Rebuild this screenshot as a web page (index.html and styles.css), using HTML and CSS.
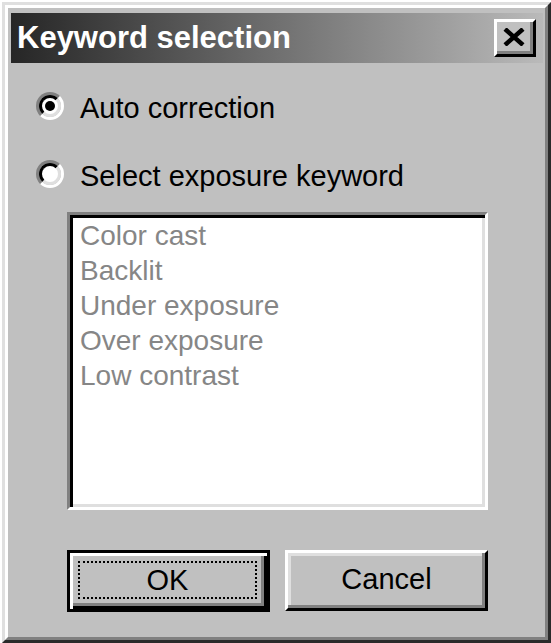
FILE: index.html
```html
<html>
<head>
  <link rel="stylesheet" href="styles.css">
</head>
<body>
  <div class="window">
    <div class="frame">
      <div class="titlebar">
        <span class="title">Keyword selection</span>
        <div class="close">
          <svg width="22" height="18" viewBox="0 0 22 18">
            <path d="M2 1 L20 17 M20 1 L2 17" stroke="#000" stroke-width="4.5" fill="none"/>
          </svg>
        </div>
      </div>
      <div class="content">
        <div class="option">
          <span class="radio"><span class="radio-in"><span class="dot"></span></span></span>
          <span class="label">Auto correction</span>
        </div>
        <div class="option">
          <span class="radio"><span class="radio-in"></span></span>
          <span class="label">Select exposure keyword</span>
        </div>
        <div class="listbox">
          <div class="item">Color cast</div>
          <div class="item">Backlit</div>
          <div class="item">Under exposure</div>
          <div class="item">Over exposure</div>
          <div class="item">Low contrast</div>
        </div>
        <div class="buttons">
          <div class="btn default"><span class="focus">OK</span></div>
          <div class="btn">Cancel</div>
        </div>
      </div>
    </div>
  </div>
</body>
</html>
```
FILE: styles.css
```css
html, body {
  margin: 0;
  padding: 0;
  background: #fff;
  font-family: 'Liberation Sans', Arial, sans-serif;
}
.window {
  margin: 2px 0 0 2px;
  width: 549px;
  height: 641px;
  box-sizing: border-box;
  border: 3px solid;
  border-color: #dfdfdf #2a2a2a #2a2a2a #dfdfdf;
  background: #c0c0c0;
}
.frame {
  height: 100%;
  box-sizing: border-box;
  border: 3px solid;
  border-color: #fff #808080 #808080 #fff;
  padding: 5px 2px 3px 3px;
  display: flex;
  flex-direction: column;
}
.titlebar {
  height: 50px;
  flex: none;
  display: flex;
  align-items: center;
  justify-content: space-between;
  padding: 0 7px 0 6px;
  background: linear-gradient(90deg, #262626, #bababa);
}
.title {
  color: #fff;
  font-weight: bold;
  font-size: 31px;
}
.close {
  width: 42px;
  height: 38px;
  box-sizing: border-box;
  border: 3px solid;
  border-color: #fff #000 #000 #fff;
  box-shadow: inset -3px -3px #808080;
  background: #c0c0c0;
  display: flex;
  align-items: center;
  justify-content: center;
  padding: 0 3px 3px 0;
}
.content {
  display: flex;
  flex-direction: column;
}
.option {
  height: 40px;
  display: flex;
  align-items: center;
  padding-left: 25px;
  margin-top: 25px;
}
.option + .option {
  margin-top: 28px;
}
.radio {
  width: 28px;
  height: 28px;
  box-sizing: border-box;
  border-radius: 50%;
  border: 3px solid;
  border-color: #808080 #fff #fff #808080;
  margin-bottom: 5px;
}
.radio-in {
  display: flex;
  align-items: center;
  justify-content: center;
  width: 100%;
  height: 100%;
  box-sizing: border-box;
  border-radius: 50%;
  border: 3px solid;
  border-color: #000 #dfdfdf #dfdfdf #000;
  background: #fff;
}
.dot {
  width: 10px;
  height: 10px;
  border-radius: 50%;
  background: #000;
}
.label {
  margin-left: 16px;
  font-size: 29px;
  color: #000;
}
.listbox {
  margin: 16px 0 0 56px;
  width: 421px;
  height: 298px;
  box-sizing: border-box;
  border: 3px solid;
  border-color: #808080 #fff #fff #808080;
  box-shadow: inset 3px 3px #000, inset -3px -3px #dfdfdf;
  background: #fff;
  padding: 3px 0 0 10px;
}
.item {
  font-size: 28px;
  line-height: 35px;
  color: #868686;
}
.buttons {
  display: flex;
  gap: 15px;
  margin: 40px 0 0 56px;
}
.btn {
  width: 203px;
  height: 61px;
  box-sizing: border-box;
  border: 3px solid;
  border-color: #fff #000 #000 #fff;
  box-shadow: inset -3px -3px #808080, inset 3px 3px #dfdfdf;
  background: #c0c0c0;
  display: flex;
  align-items: center;
  justify-content: center;
  font-size: 29px;
  color: #000;
  padding-bottom: 3px;
}
.btn.default {
  height: 62px;
  border-color: #000;
  box-shadow: inset 3px 3px #fff, inset -3px -3px #000, inset -6px -6px #808080;
  padding: 8px 10px 10px 8px;
}
.focus {
  flex: 1;
  align-self: stretch;
  display: flex;
  align-items: center;
  justify-content: center;
  border: 2px dotted #000;
}
```
